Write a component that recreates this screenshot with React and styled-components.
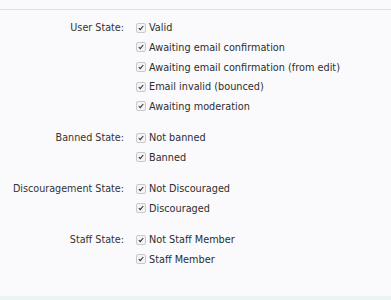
import React from 'react';
import styled, { createGlobalStyle } from 'styled-components';

const GlobalStyle = createGlobalStyle`
body {
    margin: 0;
    background: #fafafd;
    font-family: "DejaVu Sans Condensed", "DejaVu Sans", sans-serif;
}
`

const Panel = styled.div`
height: 300px;
display: flex;
flex-direction: column;
padding-top: 9px;
box-sizing: border-box;
`

const Form = styled.div`
flex: 1;
border-top: 1px solid #e3e3e6;
border-bottom: 4px solid #ecf3f3;
padding-top: 8px;
display: flex;
flex-direction: column;
gap: 11.7px;
`

const Group = styled.div`
display: grid;
grid-template-columns: 124px 1fr;
column-gap: 12px;
`

const Label = styled.div`
text-align: right;
font-size: 10.7px;
color: #333;
line-height: 19.67px;
`

const Options = styled.ul`
list-style: none;
margin: 0;
padding: 0;
`

const Option = styled.li`
display: flex;
align-items: center;
gap: 3px;
height: 19.67px;
font-size: 10.8px;
color: #2e2e2e;
`

const Box = styled.span`
width: 8px;
height: 8px;
border: 1px solid #c9c9c9;
border-radius: 2px;
background: #f4f4f4;
display: inline-flex;
align-items: center;
justify-content: center;
`

const groups = [
    { label: 'User State:', options: ['Valid', 'Awaiting email confirmation', 'Awaiting email confirmation (from edit)', 'Email invalid (bounced)', 'Awaiting moderation'] },
    { label: 'Banned State:', options: ['Not banned', 'Banned'] },
    { label: 'Discouragement State:', options: ['Not Discouraged', 'Discouraged'] },
    { label: 'Staff State:', options: ['Not Staff Member', 'Staff Member'] },
]

function Check() {
    return (
        <Box>
            <svg width="6" height="6" viewBox="0 0 6 6">
                <path d="M0.8 3.2 L2.3 4.7 L5.2 1" fill="none" stroke="#333" strokeWidth="1.1" />
            </svg>
        </Box>
    )
}

export default function App() {
    return (
        <Panel>
            <GlobalStyle />
            <Form>
                {groups.map((g) => (
                    <Group key={g.label}>
                        <Label>{g.label}</Label>
                        <Options>
                            {g.options.map((o) => (
                                <Option key={o}><Check />{o}</Option>
                            ))}
                        </Options>
                    </Group>
                ))}
            </Form>
        </Panel>
    );
}
